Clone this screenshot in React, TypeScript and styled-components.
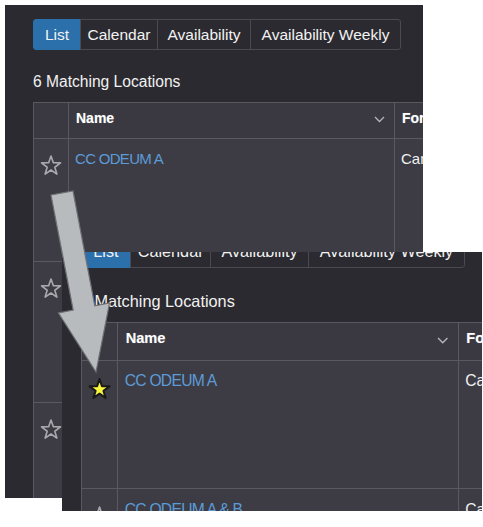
import * as React from 'react';
import styled, { createGlobalStyle } from 'styled-components';

const GlobalStyle = createGlobalStyle`
    html, body {
        margin: 0;
        padding: 0;
        background: #FFFFFF;
    }
    body {
        font-family: "Liberation Sans", Arial, sans-serif;
    }
`

const Canvas = styled.div`
    position: relative;
    width: 483px;
    height: 527px;
    overflow: hidden;
    background: #FFFFFF;
`

interface TShotProps {
    $x: number
    $y: number
    $w: number
    $h: number
}

// a cropped screenshot pasted on the canvas
const Shot = styled.div<TShotProps>`
    position: absolute;
    left: ${p => p.$x}px;
    top: ${p => p.$y}px;
    width: ${p => p.$w}px;
    height: ${p => p.$h}px;
    overflow: hidden;
    background-color: #2B2A30;
`

interface TPageProps {
    $zoom: number
    $cropX: number
    $cropY: number
}

const Page = styled.div<TPageProps>`
    zoom: ${p => p.$zoom};
    margin: ${p => -p.$cropY}px 0 0 ${p => -p.$cropX}px;
    padding: 14px 0 0 28px;
    width: 760px;
    display: flex;
    flex-direction: column;
    align-items: flex-start;
    color: #F1F1F1;
`

const Tabs = styled.div`
    display: flex;
    height: 31px;
`

const Tab = styled.div<{ $active?: boolean, $w: number }>`
    box-sizing: border-box;
    width: ${p => p.$w}px;
    height: 31px;
    display: flex;
    align-items: center;
    justify-content: center;
    font-size: 15.5px;
    color: #F2F2F2;
    background-color: ${p => p.$active ? '#2B6FAB' : 'transparent'};
    border: 1px solid ${p => p.$active ? '#2B6FAB' : '#4B4A52'};
    margin-left: -1px;
    &:first-child {
        margin-left: 0;
        border-radius: 3px 0 0 3px;
    }
    &:last-child {
        border-radius: 0 3px 3px 0;
    }
`

const Heading = styled.div`
    margin-top: 22px;
    font-size: 15.6px;
    line-height: 20px;
`

const Table = styled.div`
    margin-top: 10px;
    display: flex;
    flex-direction: column;
    border-top: 1px solid #5A5961;
    border-left: 1px solid #5A5961;
`

const Row = styled.div<{ $h: number }>`
    display: grid;
    grid-template-columns: 35px 326px 220px 180px;
    height: ${p => p.$h}px;
`

const HeadCell = styled.div`
    box-sizing: border-box;
    display: flex;
    justify-content: space-between;
    align-items: flex-start;
    padding: 7px 9px 0 7px;
    background-color: #3A3941;
    border-right: 1px solid #5A5961;
    border-bottom: 1px solid #5A5961;
    font-size: 14px;
    line-height: 16px;
    font-weight: bold;
    color: #FFFFFF;
    text-shadow: 0 0 1px rgba(255,255,255,0.35);
    white-space: nowrap;
`

const Cell = styled.div`
    box-sizing: border-box;
    padding: 11px 7px 0 6px;
    background-color: #3D3C45;
    border-right: 1px solid #5A5961;
    border-bottom: 1px solid #5A5961;
    font-size: 15px;
    line-height: 18px;
    color: #F1F1F1;
    white-space: nowrap;
`

const StarCell = styled(Cell)`
    display: flex;
    justify-content: center;
    padding: 15px 0 0 0;
`

const Link = styled.span`
    color: #5C9BD7;
    letter-spacing: -0.7px;
`

const ArrowLayer = styled.svg`
    position: absolute;
    left: 0;
    top: 0;
    pointer-events: none;
`

const STAR = '12,2 14.35,8.76 21.51,8.91 15.8,13.24 17.88,20.09 12,16 6.12,20.09 8.2,13.24 2.49,8.91 9.65,8.76'

const Star = ({ on }: { on?: boolean }) => (
    on ? (
        <svg width="24" height="24" viewBox="0 0 24 24" style={{ marginTop: 1 }}>
            <polygon points={STAR} fill="#F8F63E" stroke="#1A1A1A" strokeWidth="2" strokeLinejoin="round" />
        </svg>
    ) : (
        <svg width="24" height="24" viewBox="0 0 24 24">
            <polygon points={STAR} fill="none" stroke="#A8A8AD" strokeWidth="1.6" strokeLinejoin="round" />
        </svg>
    )
)

const Chevron = () => (
    <svg width="11" height="7" viewBox="0 0 11 7" style={{ marginTop: 6 }}>
        <polyline points="1,1 5.5,5.5 10,1" fill="none" stroke="#B5B5BA" strokeWidth="1.3" />
    </svg>
)

const rows = [
    { name: 'CC ODEUM A', h: 123, fav: true },
    { name: 'CC ODEUM A & B', h: 141, fav: false },
    { name: 'CC ODEUM B', h: 141, fav: false },
]

const LocationsPage = ({ zoom, cropX, cropY, starred }: { zoom: number, cropX: number, cropY: number, starred: boolean }) => (
    <Page $zoom={zoom} $cropX={cropX} $cropY={cropY}>
        <Tabs>
            <Tab $active $w={48}>List</Tab>
            <Tab $w={78}>Calendar</Tab>
            <Tab $w={94}>Availability</Tab>
            <Tab $w={151}>Availability Weekly</Tab>
        </Tabs>
        <Heading>6 Matching Locations</Heading>
        <Table>
            <Row $h={36}>
                <HeadCell />
                <HeadCell>Name<Chevron /></HeadCell>
                <HeadCell>Format</HeadCell>
                <HeadCell>Capacity</HeadCell>
            </Row>
            {rows.map((r, i) => (
                <Row key={i} $h={r.h}>
                    <StarCell><Star on={starred && r.fav} /></StarCell>
                    <Cell><Link>{r.name}</Link></Cell>
                    <Cell>Campus Center</Cell>
                    <Cell>120</Cell>
                </Row>
            ))}
        </Table>
    </Page>
)

export default function App() {
    return (
        <Canvas>
            <GlobalStyle />
            <Shot $x={5} $y={5} $w={418} $h={493}>
                <LocationsPage zoom={1} cropX={0} cropY={0} starred={false} />
            </Shot>
            <Shot $x={62} $y={252} $w={420} $h={259}>
                <LocationsPage zoom={1.045} cropX={10} cropY={30} starred />
            </Shot>
            <ArrowLayer width="483" height="527" viewBox="0 0 483 527">
                <polygon
                    points="51,195 73,191 94.8,305.9 109.5,303 96,372 58.5,313 73.2,310.1"
                    fill="#B8BBBE"
                    stroke="#6E7174"
                    strokeWidth="1.2"
                    strokeLinejoin="miter"
                />
            </ArrowLayer>
        </Canvas>
    );
}
